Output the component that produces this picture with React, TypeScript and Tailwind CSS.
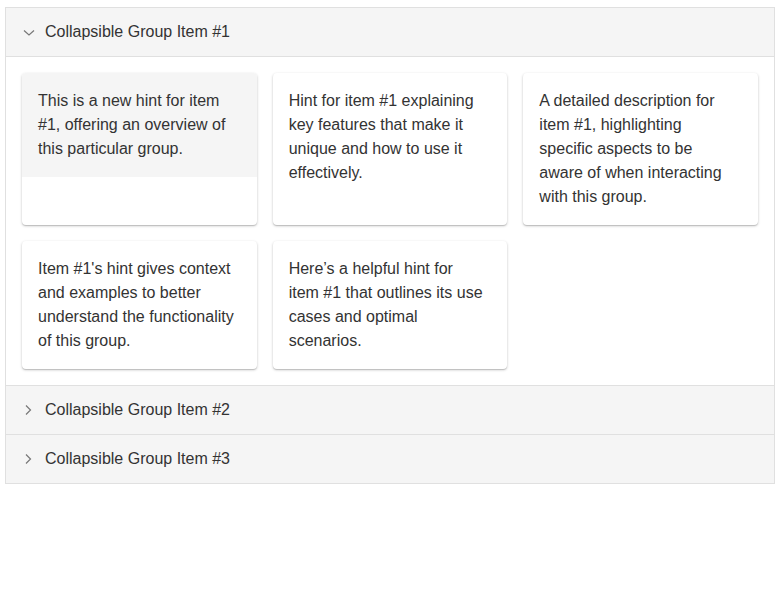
import React from "react";

const hints = [
  "This is a new hint for item #1, offering an overview of this particular group.",
  "Hint for item #1 explaining key features that make it unique and how to use it effectively.",
  "A detailed description for item #1, highlighting specific aspects to be aware of when interacting with this group.",
  "Item #1's hint gives context and examples to better understand the functionality of this group.",
  "Here\u2019s a helpful hint for item #1 that outlines its use cases and optimal scenarios.",
];

function ChevronDown() {
  return (
    <svg width="12" height="12" viewBox="0 0 12 12" className="shrink-0">
      <path d="M1 4.5 L6 9 L11 4.5" fill="none" stroke="#777" strokeWidth="1.2" />
    </svg>
  );
}
function ChevronRight() {
  return (
    <svg width="12" height="12" viewBox="0 0 12 12" className="shrink-0">
      <path d="M3 1.5 L7.5 6 L3 10.5" fill="none" stroke="#777" strokeWidth="1.2" />
    </svg>
  );
}

function Header({ title, open }: { title: string; open: boolean }) {
  return (
    <div className="flex h-[48px] items-center gap-[10px] bg-[#f5f5f5] pl-[17px] text-[16px] text-[#333]">
      {open ? <ChevronDown /> : <ChevronRight />}
      <span>{title}</span>
    </div>
  );
}

export default function App() {
  return (
    <div className="bg-white pt-[7px] px-[5px]" style={{ fontFamily: '"Liberation Sans", Arial, sans-serif' }}>
      <div className="w-[770px] border border-[#e0e0e0]">
        <Header title="Collapsible Group Item #1" open />
        <div className="border-t border-[#e0e0e0] p-[16px]">
          <div className="grid grid-cols-3 gap-[16px]">
            {hints.map((h, i) => (
              <div
                key={i}
                className="rounded-[4px] bg-white shadow-[0_1px_3px_rgba(0,0,0,0.2),0_1px_1px_rgba(0,0,0,0.14)]"
              >
                <div
                  className={
                    "rounded-t-[4px] py-[16px] pl-[16px] pr-[21px] text-[16px] leading-[24px] text-[#333] " +
                    (i === 0 ? "bg-[#f5f5f5]" : "")
                  }
                >
                  {h}
                </div>
              </div>
            ))}
          </div>
        </div>
        <div className="border-t border-[#e0e0e0]">
          <Header title="Collapsible Group Item #2" open={false} />
        </div>
        <div className="border-t border-[#e0e0e0]">
          <Header title="Collapsible Group Item #3" open={false} />
        </div>
      </div>
    </div>
  );
}
